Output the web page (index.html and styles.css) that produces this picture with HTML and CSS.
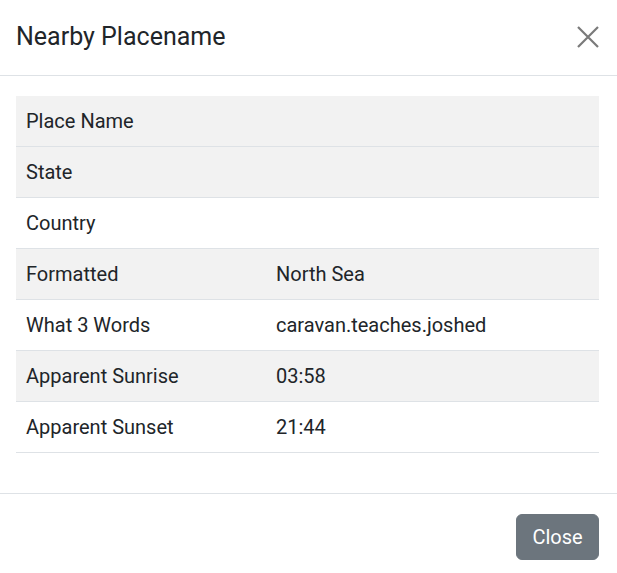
FILE: index.html
```html
<!DOCTYPE html>
<html>
<head>
<meta charset="utf-8">
<link rel="stylesheet" href="styles.css">
</head>
<body>
<div class="modal">
  <div class="modal-header">
    <h5 class="modal-title">Nearby Placename</h5>
    <button class="btn-close" aria-label="Close">
      <svg width="22" height="22" viewBox="0 0 22 22"><path d="M1 1L21 21M21 1L1 21" stroke="currentColor" stroke-width="2.2" fill="none"/></svg>
    </button>
  </div>
  <div class="modal-body">
    <table class="table">
      <tbody>
        <tr class="shade"><td>Place Name</td><td></td></tr>
        <tr class="shade"><td>State</td><td></td></tr>
        <tr><td>Country</td><td></td></tr>
        <tr class="shade"><td>Formatted</td><td>North Sea</td></tr>
        <tr><td>What 3 Words</td><td>caravan.teaches.joshed</td></tr>
        <tr class="shade"><td>Apparent Sunrise</td><td>03:58</td></tr>
        <tr><td>Apparent Sunset</td><td>21:44</td></tr>
      </tbody>
    </table>
  </div>
  <div class="modal-footer">
    <button class="btn">Close</button>
  </div>
</div>
</body>
</html>
```
FILE: styles.css
```css
html, body {
  margin: 0;
  padding: 0;
  background: #fff;
}
body {
  font-family: Roboto, "Liberation Sans", sans-serif;
  color: #212529;
}
.modal {
  width: 617px;
  display: flex;
  flex-direction: column;
}
.modal-header {
  height: 76px;
  box-sizing: border-box;
  padding: 0 18px 0 16px;
  display: flex;
  align-items: center;
  justify-content: space-between;
  border-bottom: 1px solid #dee2e6;
}
.modal-title {
  margin: 0;
  font-size: 25px;
  font-weight: 400;
  line-height: 1.5;
  position: relative;
  top: -1px;
}
.btn-close {
  border: 0;
  background: none;
  padding: 0;
  color: #7a7a7a;
  width: 22px;
  height: 22px;
  display: flex;
  position: relative;
  top: -1px;
}
.modal-body {
  padding: 20px 18px 40px 16px;
}
.table {
  width: 100%;
  border-collapse: collapse;
  font-size: 20px;
}
.table td {
  padding: 0 10px;
  height: 50px;
  line-height: 30px;
  border-bottom: 1px solid #dee2e6;
  vertical-align: middle;
}
.table td:first-child {
  width: 230px;
}
.table tr.shade td {
  background: #f2f2f2;
}
.modal-footer {
  border-top: 1px solid #dee2e6;
  padding: 20px 18px 13px 16px;
  display: flex;
  justify-content: flex-end;
}
.btn {
  font-family: inherit;
  font-size: 20px;
  line-height: 30px;
  color: #fff;
  background: #6c757d;
  border: 1px solid #6c757d;
  border-radius: 6px;
  padding: 7px 15px;
  width: 83px;
  height: 46px;
  box-sizing: border-box;
}
```
